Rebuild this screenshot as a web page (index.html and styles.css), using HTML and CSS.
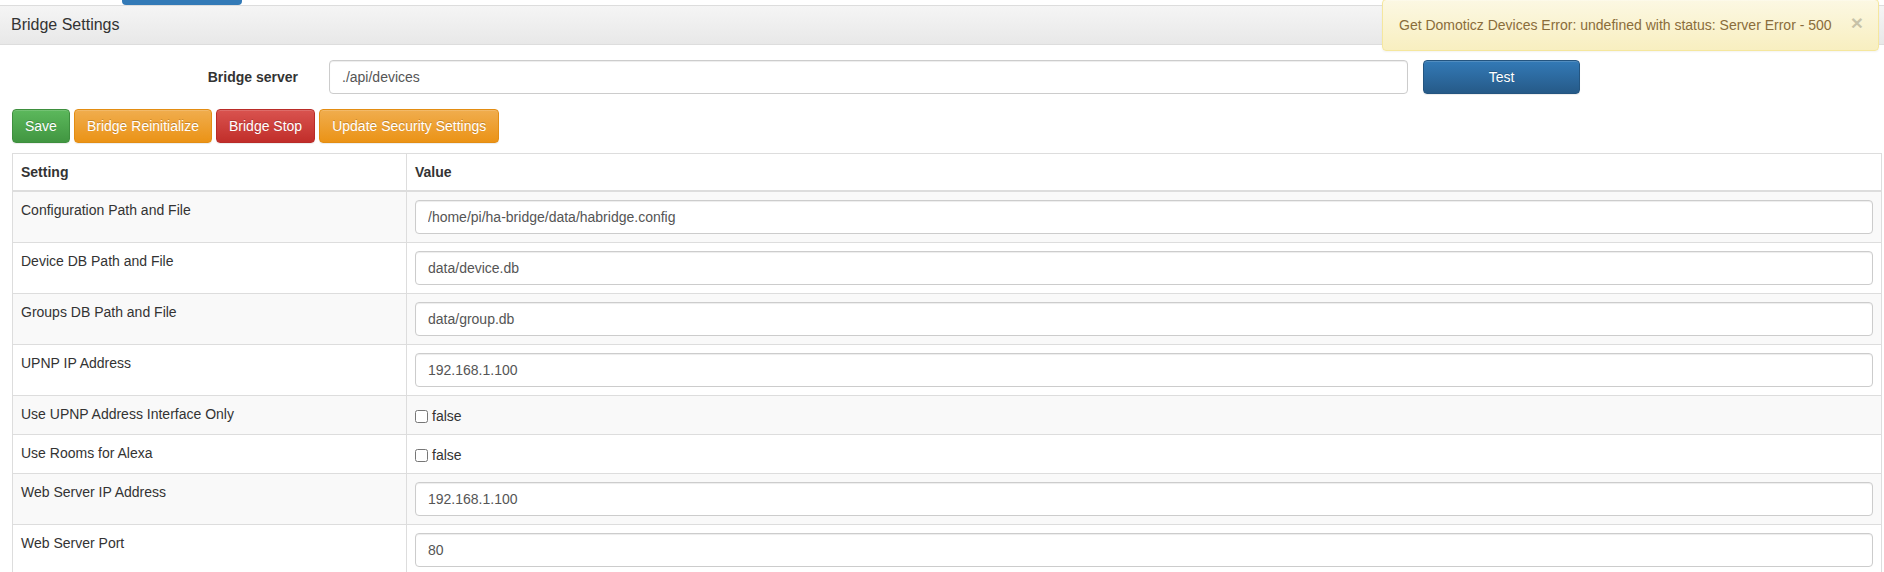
FILE: index.html
```html
<!DOCTYPE html>
<html>
<head>
<meta charset="utf-8">
<title>Bridge Settings</title>
<link rel="stylesheet" href="styles.css">
</head>
<body>
<div class="topnav"><span class="tab-active"></span></div>

<div class="panel">
  <div class="panel-heading">Bridge Settings</div>
  <div class="panel-body">
    <div class="server-row">
      <label class="server-label">Bridge server</label>
      <input class="form-control server-input" type="text" value="./api/devices">
      <button class="btn btn-primary test-btn">Test</button>
    </div>
    <div class="btn-row">
      <button class="btn btn-success">Save</button>
      <button class="btn btn-warning">Bridge Reinitialize</button>
      <button class="btn btn-danger">Bridge Stop</button>
      <button class="btn btn-warning">Update Security Settings</button>
    </div>
    <table class="settings">
      <thead>
        <tr><th class="col-setting">Setting</th><th>Value</th></tr>
      </thead>
      <tbody>
        <tr><td>Configuration Path and File</td><td><input class="form-control" type="text" value="/home/pi/ha-bridge/data/habridge.config"></td></tr>
        <tr><td>Device DB Path and File</td><td><input class="form-control" type="text" value="data/device.db"></td></tr>
        <tr><td>Groups DB Path and File</td><td><input class="form-control" type="text" value="data/group.db"></td></tr>
        <tr><td>UPNP IP Address</td><td><input class="form-control" type="text" value="192.168.1.100"></td></tr>
        <tr><td>Use UPNP Address Interface Only</td><td><label class="check"><input type="checkbox"><span>false</span></label></td></tr>
        <tr><td>Use Rooms for Alexa</td><td><label class="check"><input type="checkbox"><span>false</span></label></td></tr>
        <tr><td>Web Server IP Address</td><td><input class="form-control" type="text" value="192.168.1.100"></td></tr>
        <tr><td>Web Server Port</td><td><input class="form-control" type="text" value="80"></td></tr>
      </tbody>
    </table>
  </div>
</div>

<div class="alert alert-warning">
  <span class="alert-text">Get Domoticz Devices Error: undefined with status: Server Error - 500</span>
  <span class="close">&times;</span>
</div>
</body>
</html>
```

FILE: styles.css
```css
html, body {
  margin: 0;
  padding: 0;
  background: #fff;
  font-family: "Liberation Sans", Arial, sans-serif;
  font-size: 14px;
  line-height: 20px;
  color: #333;
  overflow: hidden;
}

.topnav {
  height: 5px;
  display: flex;
}

.tab-active {
  display: block;
  margin-left: 122px;
  width: 120px;
  height: 5px;
  background: #337ab7;
  border-radius: 0 0 4px 4px;
}

.panel {
  border-top: 1px solid #ddd;
}

.panel-heading {
  height: 39px;
  box-sizing: border-box;
  padding: 10px 11px;
  font-size: 16px;
  line-height: 18px;
  color: #333;
  background: linear-gradient(to bottom, #f5f5f5 0, #e8e8e8 100%);
  border-bottom: 1px solid #ddd;
}

.panel-body {
  padding: 15px 2px 0 12px;
}

.server-row {
  display: flex;
  align-items: center;
  height: 34px;
}

.server-label {
  width: 286px;
  text-align: right;
  font-weight: bold;
  margin-right: 31px;
}

.form-control {
  display: block;
  box-sizing: border-box;
  width: 100%;
  height: 34px;
  padding: 6px 12px;
  font-family: "Liberation Sans", Arial, sans-serif;
  font-size: 14px;
  line-height: 20px;
  color: #555;
  background: #fff;
  border: 1px solid #ccc;
  border-radius: 4px;
  box-shadow: inset 0 1px 1px rgba(0, 0, 0, .075);
  outline: none;
}

.server-input {
  width: 1079px;
  flex: none;
}

.btn {
  box-sizing: border-box;
  height: 34px;
  padding: 6px 12px;
  font-family: "Liberation Sans", Arial, sans-serif;
  font-size: 14px;
  line-height: 20px;
  color: #fff;
  border: 1px solid transparent;
  border-radius: 4px;
  text-shadow: 0 -1px 0 rgba(0, 0, 0, .2);
  box-shadow: inset 0 1px 0 rgba(255, 255, 255, .15), 0 1px 1px rgba(0, 0, 0, .075);
  cursor: pointer;
}

.btn-primary {
  background: linear-gradient(to bottom, #337ab7 0, #265a88 100%);
  border-color: #245580;
}

.btn-success {
  background: linear-gradient(to bottom, #5cb85c 0, #419641 100%);
  border-color: #3e8f3e;
}

.btn-warning {
  background: linear-gradient(to bottom, #f0ad4e 0, #eb9316 100%);
  border-color: #e38d13;
}

.btn-danger {
  background: linear-gradient(to bottom, #d9534f 0, #c12e2a 100%);
  border-color: #b92c28;
}

.test-btn {
  margin-left: 15px;
  width: 157px;
}

.btn-row {
  display: flex;
  gap: 4px;
  margin-top: 15px;
}

.settings {
  margin-top: 10px;
  width: 1870px;
  border-collapse: collapse;
  table-layout: fixed;
  border: 1px solid #ddd;
}

.settings th,
.settings td {
  padding: 8px;
  border: 1px solid #ddd;
  text-align: left;
  vertical-align: top;
  line-height: 20px;
}

.settings thead th {
  border-bottom: 2px solid #ddd;
  font-weight: bold;
}

.col-setting {
  width: 377px;
}

.settings tbody tr:nth-child(odd) {
  background: #f9f9f9;
}

.check {
  display: flex;
  align-items: center;
  height: 22px;
  gap: 4px;
}

.check input {
  margin: 2px 0 0 0;
  width: 13px;
  height: 13px;
}

.check span {
  padding-top: 2px;
}

.alert {
  position: absolute;
  top: -1px;
  right: 5px;
  width: 497px;
  box-sizing: border-box;
  height: 52px;
  padding: 15px 35px 15px 16px;
  color: #8a6d3b;
  background: linear-gradient(to bottom, #fcf8e3 0, #f8efc0 100%);
  border: 1px solid #f5e79e;
  border-radius: 4px;
  box-shadow: inset 0 1px 0 rgba(255, 255, 255, .25), 0 1px 2px rgba(0, 0, 0, .05);
}

.close {
  position: absolute;
  top: 12px;
  right: 15px;
  font-size: 21px;
  font-weight: bold;
  line-height: 21px;
  color: #000;
  opacity: .2;
  text-shadow: 0 1px 0 #fff;
}
```
